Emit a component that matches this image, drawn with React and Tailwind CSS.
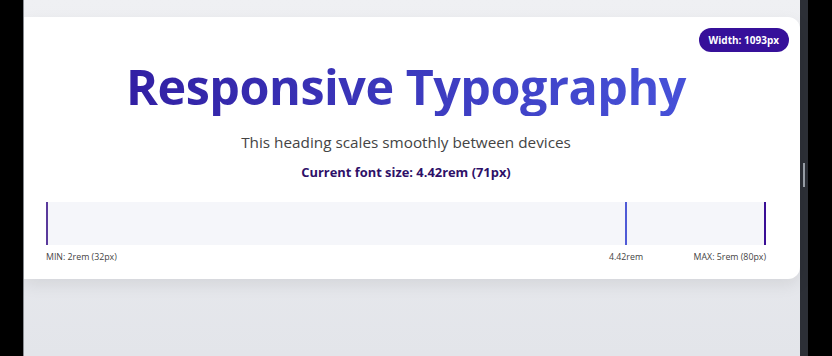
export default function App() {
  return (
    <div
      className="flex h-[356px] w-[832px] overflow-hidden"
      style={{ fontFamily: '"Open Sans", "Noto Sans", sans-serif' }}
    >
      {/* left edge */}
      <div className="w-[24px] shrink-0 bg-black border-r border-[#8a8d93]" />

      {/* page */}
      <div className="flex-1 bg-gradient-to-b from-[#eff0f3] via-[#e9eaee] to-[#e3e5ea] pt-[17px]">
        <div className="relative h-[262px] rounded-r-xl bg-white pl-[22px] pr-[34px] pt-[39px] shadow-[0_6px_16px_rgba(0,0,0,0.08)]">
          <span className="absolute right-[11px] top-[11px] rounded-full bg-[#36109a] px-[10px] py-[5px] text-[10px] font-bold leading-[14px] text-white">
            Width: 1093px
          </span>

          <h1 className="bg-gradient-to-r from-[#2f169c] to-[#4a58e0] bg-clip-text text-center text-[48.5px] font-bold leading-[60px] tracking-[-0.5px] text-transparent">
            Responsive Typography
          </h1>
          <p className="mt-[15px] text-center text-[15.3px] leading-[22px] text-[#444]">
            This heading scales smoothly between devices
          </p>
          <p className="mt-[10px] text-center text-[12.9px] font-bold leading-[18px] text-[#2e1068]">
            Current font size: 4.42rem (71px)
          </p>

          {/* range scale */}
          <div className="mt-[21px]">
            <div className="flex h-[43px] bg-[#f5f6fa]">
              <div className="w-[2px] bg-[#5a3a9c]" />
              <div className="w-[577px]" />
              <div className="w-[2px] bg-[#4f5ad6]" />
              <div className="flex-1" />
              <div className="w-[2px] bg-[#3a0f96]" />
            </div>
            <div className="relative mt-[6px] flex justify-between text-[8.8px] leading-[12px] text-[#444]">
              <span>MIN: 2rem (32px)</span>
              <span className="absolute left-[580px] -translate-x-1/2">4.42rem</span>
              <span>MAX: 5rem (80px)</span>
            </div>
          </div>
        </div>
      </div>

      {/* scrollbar strip */}
      <div className="flex w-[8px] shrink-0 justify-center bg-[#2c2f36] pt-[163px]">
        <div className="h-[24px] w-[2px] bg-[#9aa0a8]" />
      </div>
      <div className="w-[24px] shrink-0 bg-black" />
    </div>
  );
}
